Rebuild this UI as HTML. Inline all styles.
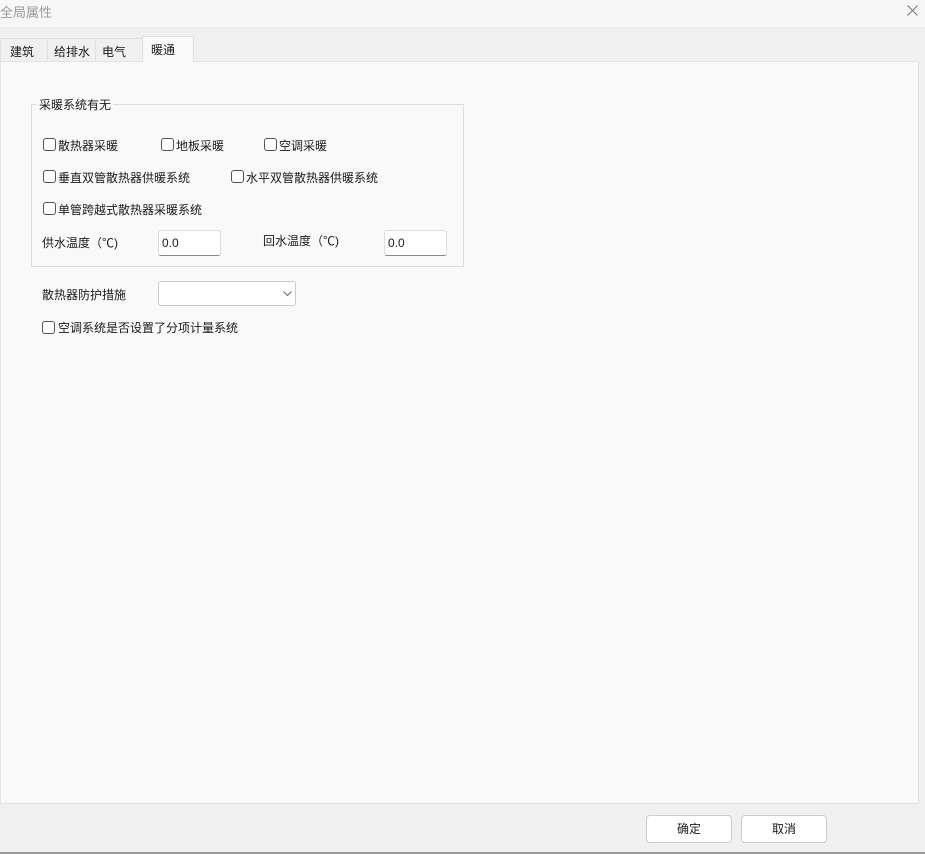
<!DOCTYPE html>
<html><head><meta charset="utf-8"><style>
*{box-sizing:border-box;margin:0;padding:0}
body{width:925px;height:854px;background:#f0f0f0;font-family:"Liberation Sans","Noto Sans CJK SC",sans-serif;font-size:12px;color:#1a1a1a;position:relative;overflow:hidden}
.a{position:absolute;white-space:nowrap}
.title{left:0;top:0;width:925px;height:27px;background:#f7f7f7}
.panel{left:0;top:61px;width:919px;height:743px;background:#f9f9f9;border:1px solid #e3e3e3}
.tab{top:38px;height:23px;border:1px solid #e0e0e0;border-bottom:none;background:#f0f0f0;padding:4px 0 0 9px}
.cb{width:13px;height:13px;border:1px solid #555;border-radius:3px;background:#fff}
.inp{background:#fff;border:1px solid #ddd;border-bottom:1px solid #888;border-radius:3px;padding:5px 3px}
.btn{top:815px;height:28px;background:#fff;border:1px solid #ccc;border-radius:4px;text-align:center;line-height:26px}
</style></head><body>
<div class="a title"></div>
<div class="a" style="left:0;top:2px;color:#999;font-size:13px">全局属性</div>
<svg class="a" style="left:907px;top:5px" width="11" height="11"><path d="M0.5 0.5L10.5 10.5M10.5 0.5L0.5 10.5" stroke="#777" stroke-width="1"/></svg>
<div class="a panel"></div>
<div class="a tab" style="left:0;width:48px">建筑</div>
<div class="a tab" style="left:47px;width:49px;padding-left:6px">给排水</div>
<div class="a tab" style="left:95px;width:48px;padding-left:6px">电气</div>
<div class="a tab" style="left:142px;top:36px;height:26px;width:52px;background:#f9f9f9;padding-left:8px">暖通</div>
<div class="a" style="left:31px;top:104px;width:433px;height:163px;border:1px solid #dcdcdc"></div>
<div class="a" style="left:37px;top:96px;background:#f9f9f9;padding:0 2px">采暖系统有无</div>
<div class="a cb" style="left:43px;top:138px"></div><div class="a" style="left:58px;top:137px">散热器采暖</div>
<div class="a cb" style="left:161px;top:138px"></div><div class="a" style="left:176px;top:137px">地板采暖</div>
<div class="a cb" style="left:264px;top:138px"></div><div class="a" style="left:279px;top:137px">空调采暖</div>
<div class="a cb" style="left:43px;top:170px"></div><div class="a" style="left:58px;top:169px">垂直双管散热器供暖系统</div>
<div class="a cb" style="left:231px;top:170px"></div><div class="a" style="left:246px;top:169px">水平双管散热器供暖系统</div>
<div class="a cb" style="left:43px;top:202px"></div><div class="a" style="left:58px;top:201px">单管跨越式散热器采暖系统</div>
<div class="a" style="left:42px;top:234px">供水温度（℃)</div>
<div class="a inp" style="left:158px;top:230px;width:63px;height:26px">0.0</div>
<div class="a" style="left:263px;top:232px">回水温度（℃)</div>
<div class="a inp" style="left:384px;top:230px;width:63px;height:26px">0.0</div>
<div class="a" style="left:42px;top:286px">散热器防护措施</div>
<div class="a" style="left:158px;top:281px;width:138px;height:25px;background:#fff;border:1px solid #ccc;border-radius:3px"></div>
<svg class="a" style="left:283px;top:291px" width="9" height="6"><path d="M0.5 0.5L4.5 4.5L8.5 0.5" fill="none" stroke="#666" stroke-width="1"/></svg>
<div class="a cb" style="left:42px;top:321px"></div><div class="a" style="left:58px;top:319px">空调系统是否设置了分项计量系统</div>
<div class="a btn" style="left:646px;width:86px">确定</div>
<div class="a btn" style="left:741px;width:86px">取消</div>
<div class="a" style="left:0;top:852px;width:925px;height:2px;background:#999"></div>
</body></html>
